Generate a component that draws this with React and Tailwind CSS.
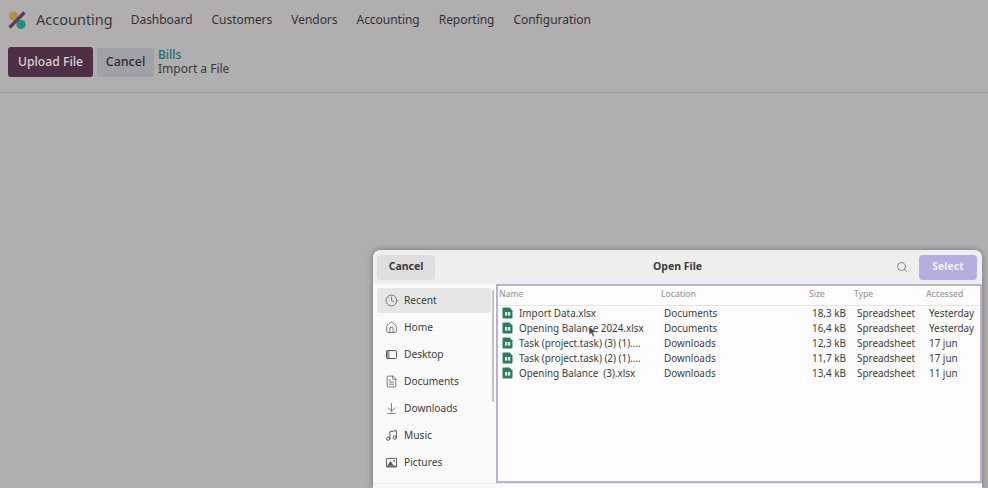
import React from 'react';
import { Clock, House, FileText, ArrowDownToLine, Music, Search } from 'lucide-react';

const navItems = ['Dashboard', 'Customers', 'Vendors', 'Accounting', 'Reporting', 'Configuration'];

const places = [
  { name: 'Recent', icon: <Clock size={13} strokeWidth={1.4} /> },
  { name: 'Home', icon: <House size={13} strokeWidth={1.4} /> },
  { name: 'Desktop', icon: <DesktopIcon /> },
  { name: 'Documents', icon: <FileText size={13} strokeWidth={1.4} /> },
  { name: 'Downloads', icon: <ArrowDownToLine size={13} strokeWidth={1.4} /> },
  { name: 'Music', icon: <Music size={13} strokeWidth={1.8} /> },
  { name: 'Pictures', icon: <PicturesIcon /> },
];

const files = [
  { name: 'Import Data.xlsx', location: 'Documents', size: '18,3 kB', when: 'Yesterday' },
  { name: 'Opening Balance 2024.xlsx', location: 'Documents', size: '16,4 kB', when: 'Yesterday' },
  { name: 'Task (project.task) (3) (1)....', location: 'Downloads', size: '12,3 kB', when: '17 jun' },
  { name: 'Task (project.task) (2) (1)....', location: 'Downloads', size: '11,7 kB', when: '17 jun' },
  { name: 'Opening Balance  (3).xlsx', location: 'Downloads', size: '13,4 kB', when: '11 jun' },
];

function DesktopIcon() {
  return (
    <svg width="13" height="13" viewBox="0 0 13 13" fill="none" stroke="currentColor">
      <rect x="1.5" y="2.5" width="10" height="8" rx="1" />
      <rect x="1.5" y="2.5" width="3" height="8" fill="currentColor" stroke="none" opacity="0.6" />
    </svg>
  );
}

function PicturesIcon() {
  return (
    <svg width="13" height="13" viewBox="0 0 13 13">
      <rect x="1" y="2" width="11" height="9.5" rx="1" fill="#666" />
      <rect x="2" y="3" width="9" height="6.5" fill="#f4f4f4" />
      <path d="M2.5 9.5 L5.5 5 L8.5 9.5 Z" fill="#555" />
      <circle cx="9.2" cy="4.8" r="0.9" fill="#555" />
    </svg>
  );
}

function Logo() {
  return (
    <svg width="19" height="20" viewBox="0 0 19 20">
      <circle cx="5.5" cy="6" r="4.6" fill="#b48f3e" />
      <circle cx="13" cy="14.5" r="4.6" fill="#1f8f80" />
      <path d="M1.5 17.5 L16.5 2.5" stroke="#5d3a57" strokeWidth="3.2" />
    </svg>
  );
}

function SheetIcon() {
  return (
    <svg width="11" height="12" viewBox="0 0 11 12" className="shrink-0">
      <path d="M1.5 0.5 H7.5 L10.5 3.5 V10.5 Q10.5 11.5 9.5 11.5 H1.5 Q0.5 11.5 0.5 10.5 V1.5 Q0.5 0.5 1.5 0.5 Z" fill="#2a7d5f" />
      <rect x="3" y="5" width="2.2" height="3.6" fill="#e6f0ec" />
      <rect x="6" y="5" width="2.2" height="3.6" fill="#e6f0ec" />
    </svg>
  );
}

export default function App() {
  return (
    <div className="relative w-[988px] h-[488px] overflow-hidden bg-[#b0aeae] text-[#2f2d2f] font-['Noto_Sans',sans-serif]">
      {/* Top nav */}
      <header className="flex items-center h-[40px] pl-[8px]">
        <Logo />
        <span className="ml-[9px] text-[14.5px] text-[#3a3a3c]">Accounting</span>
        <nav className="flex items-center gap-[19px] ml-[18px] text-[11.95px] text-[#333235]">
          {navItems.map((item) => (
            <span key={item}>{item}</span>
          ))}
        </nav>
      </header>

      {/* Control panel */}
      <div className="flex items-center h-[53px] pl-[8px] pb-[8px] border-b border-[#9c9a9b]">
        <button className="w-[85px] h-[30px] rounded-[3px] bg-[#4f2f46] text-[#d8d3d6] text-[12.2px] font-medium">Upload File</button>
        <button className="w-[57px] h-[29px] ml-[4px] rounded-[3px] bg-[#a0a1a5] text-[#2f2d2f] text-[12.5px] font-medium">Cancel</button>
        <div className="ml-[4px] text-[12px] leading-[14px]">
          <div className="text-[#1d6f70] font-medium">Bills</div>
          <div className="text-[#3a393b]">Import a File</div>
        </div>
      </div>

      {/* File dialog */}
      <div className="absolute left-[373px] top-[250px] w-[609px] h-[238px] rounded-t-[8px] bg-[#fbfafa] flex flex-col overflow-hidden shadow-[0_0_6px_rgba(0,0,0,0.35)]">
        <div className="relative flex items-center justify-between h-[34px] pl-[4px] pr-[5px] bg-[#efeeee] shrink-0">
          <button className="w-[58px] h-[25px] rounded-[4px] bg-[#dfdedf] text-[10.5px] font-bold text-[#3c3b3c]">Cancel</button>
          <span className="absolute left-[280px] text-[10.5px] font-bold text-[#3c3b3c]">Open File</span>
          <div className="flex items-center gap-[11px]">
            <Search size={12} strokeWidth={1.4} className="text-[#555]" />
            <button className="w-[58px] h-[25px] rounded-[4px] bg-[#b5aede] text-[#f0eef8] text-[10.5px] font-bold">Select</button>
          </div>
        </div>

        <div className="flex h-[199px] shrink-0">
          {/* Places sidebar */}
          <aside className="relative w-[123px] shrink-0 pl-[4px] pr-[5px] pt-[4px]">
            {places.map((place, i) => (
              <div
                key={place.name}
                className={`flex items-center gap-[6px] h-[25px] mb-[2px] pl-[8px] rounded-[3px] text-[10.2px] text-[#3c3b3c] ${i === 0 ? 'bg-[#e6e5e5]' : ''}`}
              >
                <span className="text-[#555] flex w-[13px] justify-center">{place.icon}</span>
                {place.name}
              </div>
            ))}
            <div className="absolute right-[2px] top-[6px] w-[2px] h-[112px] rounded-full bg-[#c3c2c2]" />
          </aside>

          {/* File list */}
          <div className="flex-1 bg-[#fefcfd] border-2 border-[#b8b2d8]">
            <div className="grid grid-cols-[162px_148px_45px_72px_1fr] items-center h-[20px] pl-[1px] pb-[2px] border-b border-[#e6e5e5] text-[8.5px] font-medium text-[#9a999a]">
              <span>Name</span>
              <span>Location</span>
              <span>Size</span>
              <span>Type</span>
              <span>Accessed</span>
            </div>
            <div>
              {files.map((file) => (
                <div key={file.name} className="grid grid-cols-[162px_148px_33px_84px_1fr] items-center h-[15px] pl-[4px] text-[9.9px] text-[#3c3b3c] whitespace-pre">
                  <span className="flex items-center gap-[6px]">
                    <SheetIcon />
                    {file.name}
                  </span>
                  <span>{file.location}</span>
                  <span className="text-right">{file.size}</span>
                  <span className="pl-[12px]">Spreadsheet</span>
                  <span>{file.when}</span>
                </div>
              ))}
            </div>
          </div>
        </div>
        <div className="flex-1 border-t border-[#ecebeb]" />
      </div>

      {/* Mouse pointer */}
      <svg width="9" height="13" viewBox="0 0 9 13" className="absolute left-[588px] top-[325px]">
        <path d="M1 1 L1 10 L3.3 8.2 L5 12 L6.6 11.3 L5 7.6 L8 7.4 Z" fill="#4a4a4a" stroke="#fff" strokeWidth="0.5" />
      </svg>
    </div>
  );
}
